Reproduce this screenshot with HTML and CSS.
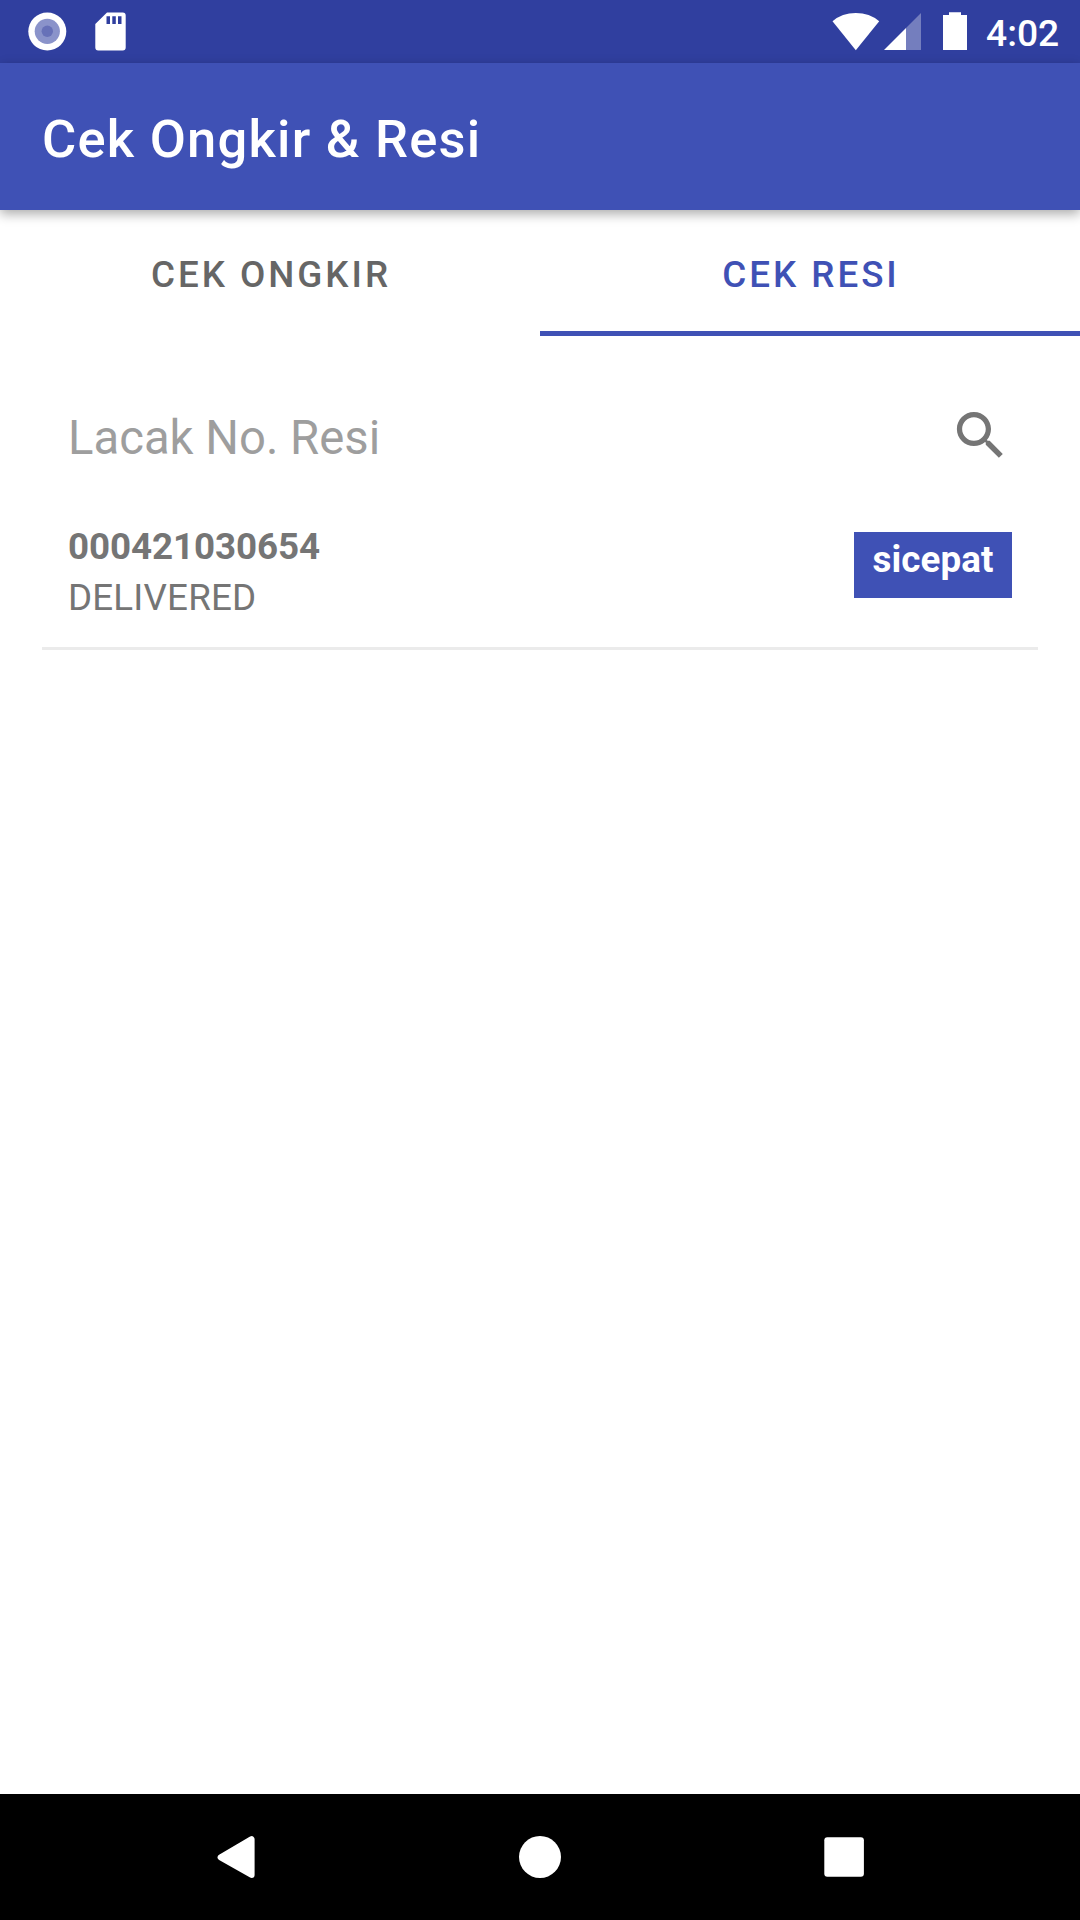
FILE: index.html
```html
<!DOCTYPE html>
<html lang="id">
<head>
<meta charset="utf-8">
<title>Cek Ongkir &amp; Resi</title>
<link rel="stylesheet" href="styles.css">
</head>
<body>
<div class="screen">
  <header class="status-bar">
    <svg class="status-icons" width="130" height="63" viewBox="0 0 130 63">
      <circle cx="47.3" cy="31.5" r="19" fill="#fff"/>
      <circle cx="47.3" cy="31.3" r="12.6" fill="#8a93ca"/>
      <circle cx="47.3" cy="31.3" r="5.7" fill="#6771b8"/>
      <path fill="#fff" fill-rule="evenodd" d="M107 12.5h15.7a3 3 0 0 1 3 3v32a3 3 0 0 1-3 3H98.300a3 3 0 0 1-3-3V24zM106.500 16.300v7.700h3.500v-7.700zM112.300 16.300v7.700h3.500v-7.700zM118 16.300v7.700h3.500v-7.700z"/>
    </svg>
    <div class="status-right">
      <svg width="150" height="63" viewBox="826 0 150 63" fill="#fff">
        <path d="M832.500 21.200Q842 13 855.800 13T879.200 21.200L855.800 50.300z"/>
        <path fill-opacity=".33" d="M906 28v22h15V13z"/>
        <path d="M884 50h22V28z"/>
        <path d="M949 12.300h12V15h6v35h-24V15h6z"/>
      </svg>
      <span class="clock">4:02</span>
    </div>
  </header>
  <div class="app-bar"><h1 class="title">Cek Ongkir &amp; Resi</h1></div>
  <nav class="tabs">
    <div class="tab">CEK ONGKIR</div>
    <div class="tab tab-active">CEK RESI</div>
  </nav>
  <main class="content">
    <div class="search">
      <span class="placeholder">Lacak No. Resi</span>
      <svg class="search-icon" width="63" height="63" viewBox="0 0 24 24" fill="#757575"><path d="M15.500 14h-.79l-.28-.27C15.410 12.590 16 11.110 16 9.500 16 5.910 13.090 3 9.500 3S3 5.910 3 9.500 5.910 16 9.500 16c1.610 0 3.090-.59 4.230-1.570l.27.28v.79l5 4.990L20.490 19l-4.990-5zm-6 0C7.010 14 5 11.990 5 9.500S7.010 5 9.500 5 14 7.010 14 9.500 11.990 14 9.500 14z"/></svg>
    </div>
    <div class="parcel">
      <div class="parcel-info">
        <div class="parcel-number">000421030654</div>
        <div class="parcel-status">DELIVERED</div>
      </div>
      <div class="courier">sicepat</div>
    </div>
  </main>
  <footer class="nav-bar">
    <svg width="1080" height="126" viewBox="0 0 1080 126" fill="#fff">
      <path stroke="#fff" stroke-width="6" stroke-linejoin="round" d="M251.600 45.200v35.800L220.600 63.300z"/>
      <circle cx="540" cy="63" r="21"/>
      <rect x="824.300" y="43.200" width="39.600" height="39.600" rx="3"/>
    </svg>
  </footer>
</div>
</body>
</html>
```
FILE: styles.css
```css
* { box-sizing: border-box; }
body { margin: 0; font-family: Roboto, sans-serif; background: #fff; }
.screen { width: 1080px; height: 1920px; display: flex; flex-direction: column; overflow: hidden; }
.status-bar { height: 63px; flex: none; display: flex; justify-content: space-between; background: #303f9f; }
.status-icons { display: block; }
.status-right { display: flex; width: 254px; }
.status-right svg { display: block; flex: none; }
.clock { padding-left: 10px; font-size: 37.200px; font-weight: 500; line-height: 66px; color: #fff; }
.app-bar { height: 147px; flex: none; display: flex; align-items: center; padding: 4px 42px 0; background: #3f51b5; box-shadow: 0 4px 11px rgba(0, 0, 0, .33); }
.title { margin: 0; font-size: 52.500px; font-weight: 500; letter-spacing: 1.220px; line-height: 62px; color: #fff; }
.tabs { height: 126px; flex: none; display: flex; }
.tab { flex: 1; padding: 3px 0 0 2px; text-align: center; font-size: 36.750px; font-weight: 500; letter-spacing: 2.980px; line-height: 123px; color: #666; }
.tab-active { color: #3f51b5; border-bottom: 5px solid #3f51b5; }
.content { flex: 1; padding: 68px 42px 0; }
.search { display: flex; justify-content: space-between; height: 102px; padding: 0 26px; }
.placeholder { font-size: 47.250px; line-height: 68px; color: #9e9e9e; }
.parcel { display: flex; justify-content: space-between; height: 144px; padding: 15px 26px 0; border-bottom: 3px solid #ebebeb; }
.parcel-info { font-size: 36.750px; line-height: 51px; color: #757575; }
.parcel-number { font-weight: 700; letter-spacing: -.080px; }
.parcel-status { letter-spacing: .180px; }
.courier { width: 158px; height: 66px; margin-top: 11px; text-align: center; font-size: 36.750px; font-weight: 700; letter-spacing: .120px; line-height: 56px; color: #fff; background: #3f51b5; }
.nav-bar { height: 126px; flex: none; background: #000; }
.nav-bar svg { display: block; }
```
